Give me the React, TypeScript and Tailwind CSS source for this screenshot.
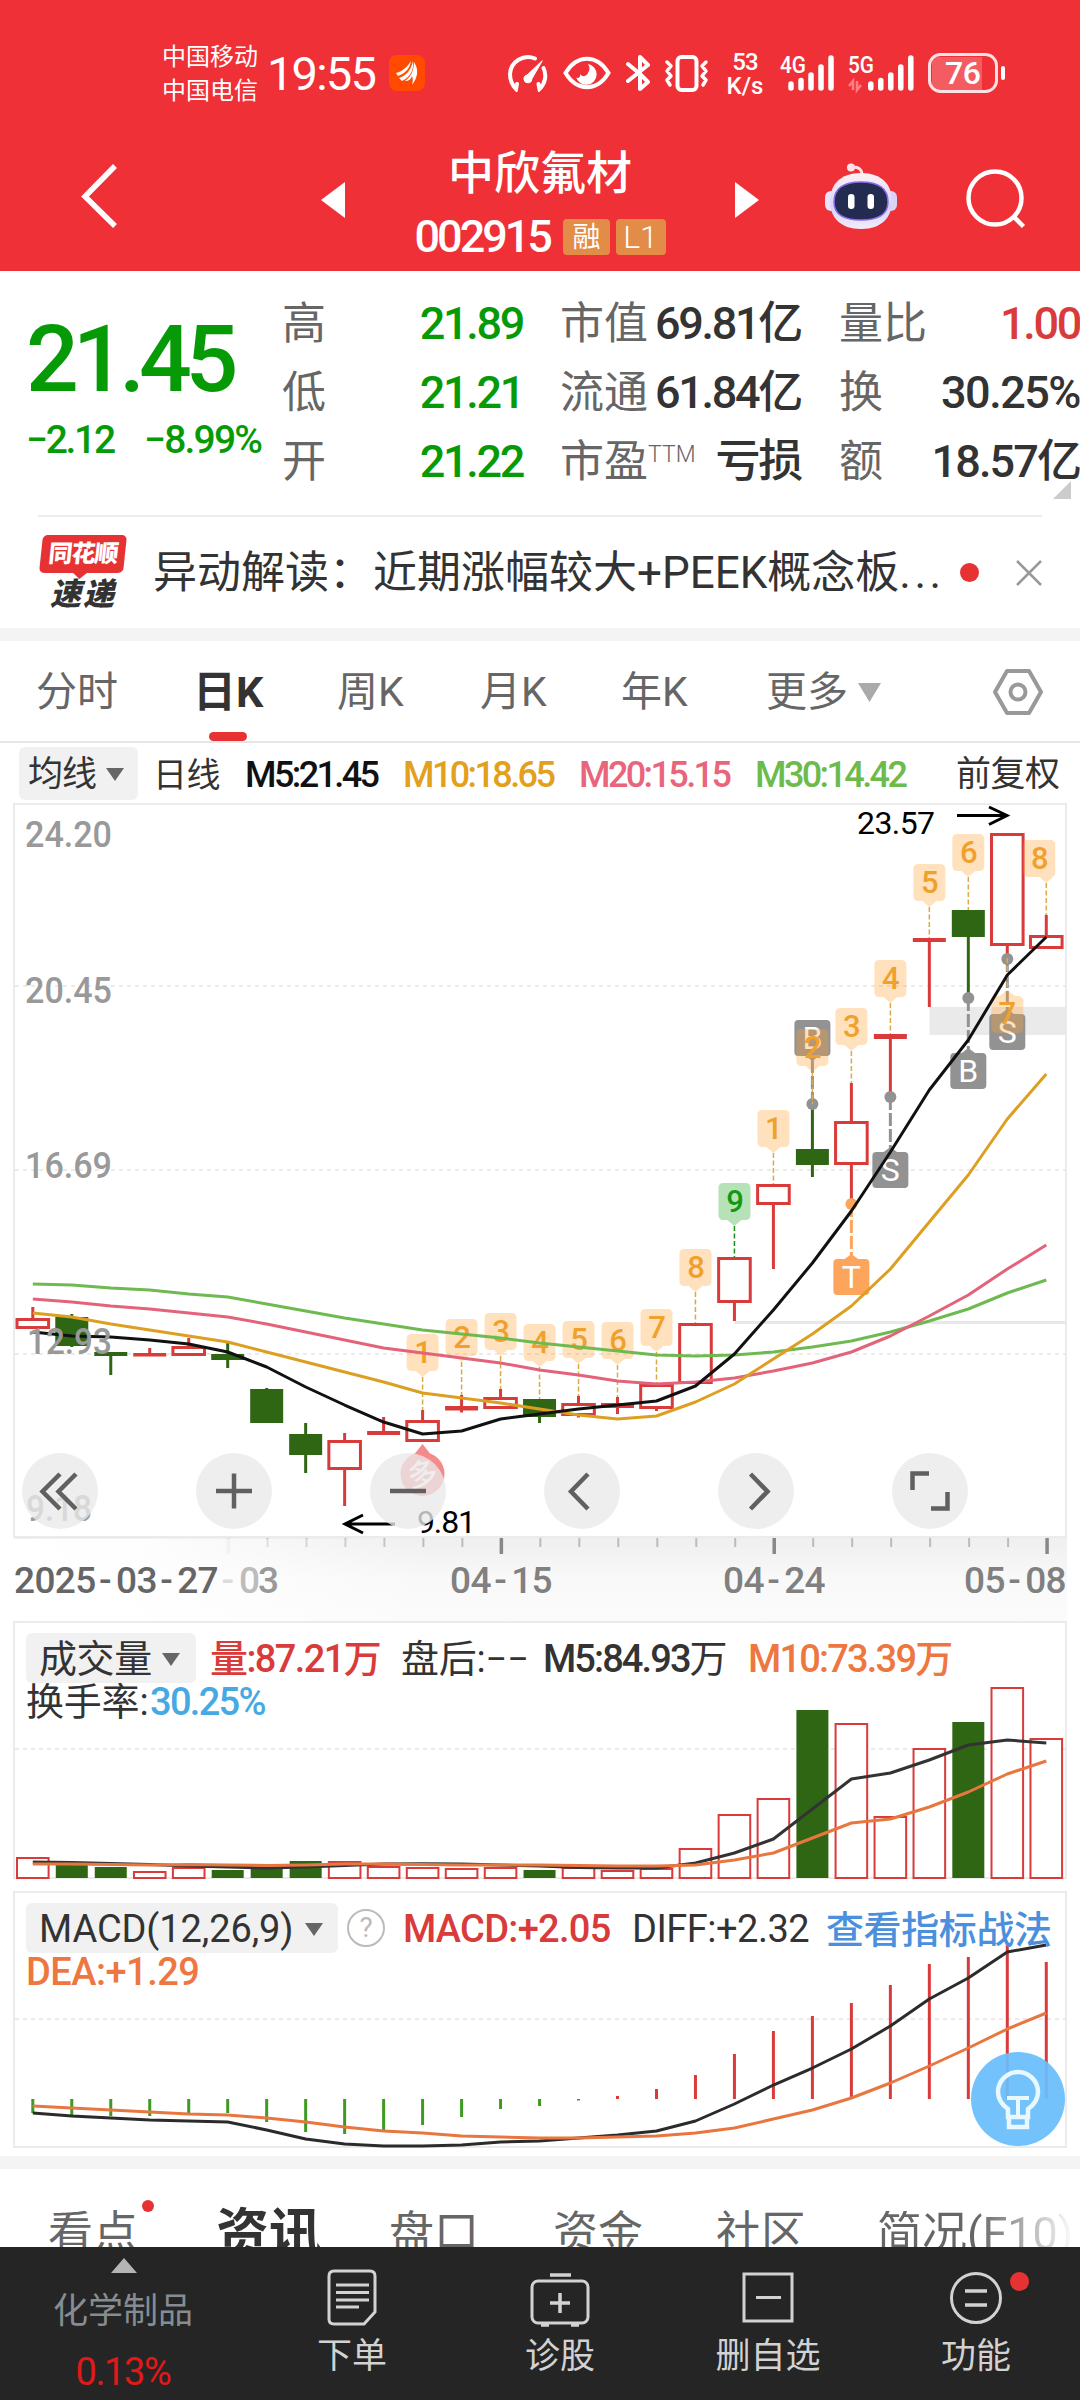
import type { ReactNode } from 'react';

type Candle = {
  t: number; // body top
  b: number; // body bottom
  h?: number; // wick top
  l?: number; // wick bottom
  up: boolean;
};

const STEP = 38.98;
const cx = (i: number) => 32.8 + i * STEP;
const line = (ys: number[]) => ys.map((y, i) => `${cx(i).toFixed(1)},${y}`).join(' ');

const RED = '#d93a3a';
const GREEN = '#2f6614';

const CANDLES: Candle[] = [
  { t: 1318, b: 1329, h: 1307, up: true },
  { t: 1317, b: 1346, h: 1314, l: 1347, up: false },
  { t: 1352, b: 1356, l: 1375, up: false },
  { t: 1353, b: 1356.5, h: 1348, up: true },
  { t: 1346, b: 1356, h: 1338, up: true },
  { t: 1354, b: 1360, h: 1343, l: 1368, up: false },
  { t: 1389, b: 1423, h: 1388, up: false },
  { t: 1434, b: 1455, h: 1423, l: 1473, up: false },
  { t: 1440, b: 1470, h: 1433, l: 1506, up: true },
  { t: 1431, b: 1435, h: 1417, up: true },
  { t: 1420, b: 1442, h: 1410, up: true },
  { t: 1406, b: 1410.5, h: 1395, l: 1412.5, up: true },
  { t: 1397, b: 1409, h: 1389, up: true },
  { t: 1399, b: 1417, l: 1423, up: false },
  { t: 1403, b: 1416, h: 1396, l: 1417.5, up: true },
  { t: 1403, b: 1408, h: 1397, l: 1414, up: true },
  { t: 1384, b: 1409, l: 1411, up: true },
  { t: 1323, b: 1384, up: true },
  { t: 1257, b: 1303, l: 1321, up: true },
  { t: 1184, b: 1205, l: 1269, up: true },
  { t: 1149, b: 1165, h: 1104, l: 1177, up: false },
  { t: 1121, b: 1165, h: 1083, l: 1204, up: true },
  { t: 1034, b: 1039, l: 1097, up: true },
  { t: 938, b: 942, l: 1007, up: true },
  { t: 910, b: 937, l: 998, up: false },
  { t: 833, b: 946, l: 958, up: true },
  { t: 935, b: 949, h: 915, up: true },
];

const M5 = [1332, 1336, 1337, 1340, 1344, 1352, 1367, 1387, 1405, 1422, 1434, 1431, 1419, 1414, 1409, 1405, 1401, 1386, 1354, 1310, 1263, 1211, 1152, 1090, 1040, 975, 937];
const M10 = [1313, 1317, 1324, 1330, 1336, 1342, 1352, 1362, 1372, 1382, 1393, 1398, 1403, 1409, 1415, 1419, 1416, 1402, 1384, 1359, 1334, 1306, 1269, 1222, 1175, 1119, 1074];
const M20 = [1299, 1302, 1306, 1309, 1313, 1317, 1324, 1332, 1340, 1348, 1353, 1358, 1363, 1370, 1375, 1381, 1384, 1382, 1378, 1371, 1363, 1352, 1336, 1316, 1295, 1269, 1245];
const M30 = [1284, 1285, 1288, 1290, 1294, 1297, 1304, 1311, 1318, 1324, 1330, 1334, 1338, 1343, 1347, 1351, 1355, 1356, 1355, 1352, 1347, 1341, 1332, 1321, 1309, 1293, 1280];

// [candle index, digit, tag top, end of the dashed line]
const TAGS: [number, string, number, number][] = [
  [10, '1', 1334, 1410],
  [11, '2', 1319, 1395],
  [12, '3', 1313, 1389],
  [13, '4', 1324, 1399],
  [14, '5', 1321, 1396],
  [15, '6', 1322, 1397],
  [16, '7', 1309, 1384],
  [17, '8', 1249, 1323],
  [18, '9', 1183, 1257],
  [19, '1', 1110, 1184],
  [20, '2', 1029, 1104],
  [21, '3', 1008, 1083],
  [22, '4', 960, 1034],
  [23, '5', 864, 938],
  [24, '6', 834, 910],
  [26, '8', 840, 915],
];

// [candle index, letter, box top, dot y, colour]
const TRADES: [number, string, number, number, string][] = [
  [20, 'B', 1020, 1104, '#929292'],
  [21, 'T', 1259, 1204, '#fda55d'],
  [22, 'S', 1152, 1097, '#929292'],
  [24, 'B', 1053, 998, '#929292'],
  [25, 'S', 1014, 959, '#929292'],
];

const VOLUME: [number, boolean][] = [
  [1857, true], [1865, false], [1867, false], [1871, true], [1867, true], [1870, false], [1868, false],
  [1861, false], [1861, true], [1866, true], [1867, true], [1868, true], [1867, true], [1870, false],
  [1867, true], [1870, true], [1868, true], [1848, true], [1814, true], [1798, true], [1710, false],
  [1723, true], [1816, true], [1748, true], [1722, false], [1687, true], [1738, true],
];
const V5 = [1862, 1862.5, 1863.5, 1864.5, 1866, 1867, 1868, 1867, 1865.5, 1864, 1863.7, 1864, 1865, 1866, 1867.5, 1868, 1868, 1863, 1853, 1839, 1809, 1779, 1773, 1760, 1745, 1740, 1743];
const V10 = [1864, 1864, 1864.5, 1865, 1864.5, 1865, 1865.5, 1865, 1864, 1864, 1864.5, 1865, 1865, 1865, 1865.5, 1866, 1866, 1865, 1860, 1853, 1838, 1823, 1819, 1807, 1792, 1774, 1761];

const MACD = [2113, 2115, 2116, 2116, 2113, 2113, 2122, 2132, 2134, 2130, 2125, 2117, 2109, 2106, 2100.5, 2096, 2089, 2075, 2054, 2031, 2016, 2003, 1985, 1964, 1957, 1943, 1962];
const DIFF = [2113, 2116, 2118, 2120, 2121, 2122, 2130, 2139, 2144, 2146, 2146, 2145, 2142, 2141, 2138, 2135, 2131, 2121, 2104, 2085, 2068, 2049, 2026, 1999, 1978, 1952, 1945];
const DEA = [2106, 2108, 2110, 2112, 2114, 2115, 2118, 2122, 2127, 2131, 2133, 2136, 2137, 2138, 2138, 2137, 2136, 2133, 2128, 2119, 2110, 2098, 2083, 2066, 2048, 2029, 2013];

export default function App() {
  return (
    <main className="flex h-[2400px] w-[1080px] flex-col overflow-hidden bg-white font-[Roboto,'Noto_Sans_CJK_SC',sans-serif] leading-none whitespace-nowrap text-[#333]">
      <header className="h-[271px] shrink-0 bg-[#f03037] text-white">
        <StatusBar />
        <TitleBar />
      </header>
      <Quote />
      <News />
      <div className="h-[13px] shrink-0 bg-[#f4f4f4]" />
      <PeriodTabs />
      <MaLegend />
      <KChart />
      <VolumePanel />
      <MacdPanel />
      <div className="h-[13px] shrink-0 bg-[#f4f4f4]" />
      <InfoTabs />
      <BottomBar />
    </main>
  );
}

function StatusBar() {
  return (
    <div className="flex h-[146px] items-center pl-[162px] [&>*]:shrink-0">
      <div className="flex w-[105px] flex-col gap-[10px] pt-[2px] text-[24px]">
        <span>中国移动</span>
        <span>中国电信</span>
      </div>
      <span className="w-[122px] text-[47px] tracking-[-1.800px]">19:55</span>
      <svg width="36" height="36" viewBox="0 0 36 36" className="mr-[82px]">
        <rect width="36" height="36" rx="8" fill="#ff4a00" />
        <path d="M7 18C14 16 18 12 22 6c-1 7-5 12-13 15zM10 23c7-2 12-8 14-17 1 8-2 16-11 20zM16 26c6-4 9-11 9-19 5 8 4 15-2 23 1-4 1-7 0-9-1 3-3 5-7 5z" fill="#fff" />
      </svg>

      {/* 网速仪表 */}
      <svg width="42" height="38" viewBox="0 0 42 38" fill="none" stroke="#fff" strokeWidth="4" strokeLinecap="round" className="mr-[14px]">
        <path d="M28 4.500A18 18 0 0 0 3 20C3 26 5 31 9 35l1-5M36.500 14a18 18 0 0 1-4 21l-1-5" />
        <path d="M35 7L20 21a4 4 0 1 0 5 4z" fill="#fff" strokeWidth="1" />
      </svg>
      <svg width="48" height="34" viewBox="0 0 48 34" fill="none" className="mr-[15px]">
        <path d="M2.500 17C14-2 34-2 45.500 17 34 36 14 36 2.500 17z" stroke="#fff" strokeWidth="4" />
        <path d="M25 8a10.500 10.500 0 1 1-12 13c1 2 5 1 4-3 2 3 6 3 8-1 2-3 2-6 0-9z" fill="#fff" />
      </svg>
      <svg width="24" height="38" viewBox="0 0 24 38" fill="none" stroke="#fff" strokeWidth="4" strokeLinecap="round" strokeLinejoin="round" className="mr-[14px]">
        <path d="M2 10L14 20V35l8-7-8-8M14 20V3l8 8L2 27" />
      </svg>
      <svg width="45" height="38" viewBox="0 0 45 38" fill="none" stroke="#fff" strokeWidth="3.500" strokeLinecap="round" strokeLinejoin="round" className="mr-[17px]">
        <rect x="13.500" y="3" width="19" height="33" rx="4" strokeWidth="4" />
        <path d="M3 8l4 4-4 5 4 5-4 4 3 5M42 8l-4 4 4 5-4 5 4 4-3 5" />
      </svg>
      <div className="flex w-[38px] flex-col items-center pt-px text-[24px] font-medium">
        <span className="tracking-[-1px]">53</span>
        <span>K/s</span>
      </div>
      <div className="mr-[12px] ml-[16px] flex">
        <Signal label="4G" />
        <Signal label="5G" data />
      </div>
      <svg width="78" height="40" viewBox="0 0 78 40" fill="none">
        <rect x="4" y="4" width="50" height="33" fill="#fff" fillOpacity=".22" />
        <rect x="1.500" y="1.500" width="67" height="37" rx="11" stroke="#fff" strokeOpacity=".85" strokeWidth="3" />
        <path d="M75 15v10" stroke="#fff" strokeWidth="4" strokeLinecap="round" />
        <text x="17" y="31" fontSize="32" fontWeight="500" fill="#fff" textLength="36">76</text>
      </svg>
    </div>
  );
}

function Signal({ label, data = false }: { label: string; data?: boolean }) {
  return (
    <svg width="68" height="40" viewBox="0 0 68 40" fill="none" className="overflow-visible">
      <text x="0" y="20" fontSize="24" fontWeight="500" fill="#fff" textLength="26" lengthAdjust="spacingAndGlyphs">
        {label}
      </text>
      {data && <path d="M1 33l4-5v9M9 28v9l4-5" stroke="#ff8084" strokeWidth="2.500" />}
      <g stroke="#fff" strokeWidth="5.500" strokeLinecap="round" transform={data ? 'translate(12.800 0)' : 'translate(1 0)'}>
        <path d="M10 31v4M20 27.500v7.500M30 22v13M40 14v21M50 5v30" />
      </g>
    </svg>
  );
}

function TitleBar() {
  return (
    <div className="flex items-start">
      <svg width="40" height="66" viewBox="0 0 40 66" fill="none" className="mt-[17px] ml-[80px]">
        <path d="M35 3L5 33.500 35 63" stroke="#fff" strokeWidth="5.500" />
      </svg>
      <svg width="24" height="36" viewBox="0 0 24 36" className="mt-[36px] ml-[201px]">
        <path d="M24 0v36L0 18z" fill="#fff" />
      </svg>
      <div className="flex w-[390px] flex-col items-center">
        <h1 className="mt-[4px] text-[46px] font-medium">中欣氟材</h1>
        <div className="mt-[18px] flex items-center">
          <span className="w-[149px] text-[45px] font-medium tracking-[-3px]">002915</span>
          <span className="mr-[6px] rounded-[4px] bg-[#e38c47] px-[9px] pt-[5px] pb-[3px] text-[28px]">融</span>
          <span className="w-[50px] rounded-[4px] bg-[#e38c47] py-[2px] text-center text-[32px] font-light">L1</span>
        </div>
      </div>
      <svg width="24" height="36" viewBox="0 0 24 36" className="mt-[36px]">
        <path d="M0 0v36l24-18z" fill="#fff" />
      </svg>
      <svg width="72" height="68" viewBox="0 0 72 68" className="mt-[17px] ml-[66px]">
        <defs>
          <linearGradient id="shell" x1="0" y1="0" x2="0" y2="1">
            <stop offset="0" stopColor="#fff1f4" />
            <stop offset=".6" stopColor="#d6d3fa" />
            <stop offset="1" stopColor="#f1ecfb" />
          </linearGradient>
        </defs>
        <path d="M37 12c0-5-2-8-9-8" fill="none" stroke="#ffe0e6" strokeWidth="3" />
        <circle cx="26" cy="4.500" r="4" fill="#ffe3e8" />
        <rect x="0" y="28" width="12" height="20" rx="6" fill="#e9e4fb" />
        <rect x="60" y="28" width="12" height="20" rx="6" fill="#d9d3f8" />
        <path d="M36 10C57 10 67 22 67 38S57 66 36 66 5 54 5 38 15 10 36 10z" fill="url(#shell)" />
        <path d="M36 19c18 0 27 6 27 20 0 12-8 18-27 18S9 51 9 39c0-14 9-20 27-20z" fill="#232b50" stroke="#8a6be8" strokeWidth="1.500" />
        <rect x="23" y="31" width="6.500" height="15" rx="3.200" fill="#fff" />
        <rect x="42.500" y="31" width="6.500" height="15" rx="3.200" fill="#fff" />
      </svg>
      <svg width="64" height="64" viewBox="0 0 64 64" fill="none" stroke="#fff" strokeWidth="4.500" className="mt-[21px] ml-[67px]">
        <circle cx="31" cy="31" r="26.500" />
        <path d="M50 50l9.500 9.500" />
      </svg>
    </div>
  );
}

function Quote() {
  return (
    <section className="relative flex h-[244px] shrink-0">
      <div className="w-[282px] pt-[42px] pl-[26px] text-[#079a07]">
        <div className="text-[93px] font-medium tracking-[-6.200px]">21.45</div>
        <div className="mt-[15px] flex text-[39px] font-medium">
          <span className="w-[118px] tracking-[-2.300px]">−2.12</span>
          <span className="tracking-[-1.800px]">−8.99%</span>
        </div>
      </div>
      <div className="w-[241px] pt-[18px]">
        <Stat label="高" value={<span className="text-[#079a07]">21.89</span>} />
        <Stat label="低" value={<span className="text-[#079a07]">21.21</span>} />
        <Stat label="开" value={<span className="text-[#079a07]">21.22</span>} />
      </div>
      <div className="ml-[37px] w-[241px] pt-[18px]">
        <Stat label="市值" value="69.81亿" />
        <Stat label="流通" value="61.84亿" />
        <Stat label={<>市盈<span className="relative -top-[15px] text-[23px] font-light">TTM</span></>} value="亏损" />
      </div>
      <div className="ml-[38px] w-[241px] pt-[18px]">
        <Stat label="量比" value={<span className="text-[#d93a3a]">1.00</span>} />
        <Stat label="换" value={<span className="tracking-[-1.500px]">30.25%</span>} />
        <Stat label="额" value={<span className="tracking-[-1.900px]">18.57亿</span>} />
      </div>
      <svg width="18" height="18" viewBox="0 0 18 18" className="absolute top-[210px] right-[9px]">
        <path d="M18 0v18H0z" fill="#ccc" />
      </svg>
    </section>
  );
}

function Stat({ label, value }: { label: ReactNode; value: ReactNode }) {
  return (
    <div className="flex h-[69px] items-center justify-between text-[44px]">
      <span className="text-[#666]">{label}</span>
      <span className="text-[45px] font-medium tracking-[-2.300px]">{value}</span>
    </div>
  );
}

function News() {
  return (
    <section className="ml-[38px] flex h-[113px] w-[1004px] shrink-0 items-center border-t-2 border-[#ededed]">
      <div className="flex w-[90px] flex-col items-center font-black italic">
        <div className="relative flex h-[38px] w-[84px] -skew-x-6 items-center justify-center rounded-[5px] bg-[#e63232] text-[24px] tracking-[-1px] text-white not-italic">
          同花顺
          <svg width="16" height="7" viewBox="0 0 16 7" className="absolute top-[37px] left-[33px]">
            <path d="M0 0h16L8 7z" fill="#e63232" />
          </svg>
        </div>
        <div className="mt-[6px] text-[31px] tracking-[2px]">速递</div>
      </div>
      <p className="ml-[25px] w-[797px] text-[44px]">
        异动解读：近期涨幅较大+PEEK概念板<span className="tracking-[3.500px]">...</span>
      </p>
      <span className="ml-[10px] h-[19px] w-[19px] shrink-0 rounded-full bg-[#e63232]" />
      <svg width="26" height="26" viewBox="0 0 26 26" stroke="#999" strokeWidth="2.500" className="ml-auto">
        <path d="M1 1l24 24M25 1L1 25" />
      </svg>
    </section>
  );
}

function PeriodTabs() {
  return (
    <nav className="relative flex h-[102px] shrink-0 items-center border-b-2 border-[#e6e6e6] pt-[2px] pl-[36px] text-[41px] text-[#666]">
      <span className="w-[157px]">分时</span>
      <span className="w-[144px] text-[43px] font-bold text-[#333]">日K</span>
      <span className="w-[143px]">周K</span>
      <span className="w-[141px]">月K</span>
      <span className="w-[145px]">年K</span>
      <span>更多</span>
      <svg width="23" height="19" viewBox="0 0 23 19" className="ml-[10px]">
        <path d="M0 0h23L11.500 19z" fill="#aaa" />
      </svg>
      <svg width="50" height="48" viewBox="0 0 50 48" fill="none" stroke="#999" strokeWidth="4" strokeLinejoin="round" className="ml-[112px]">
        <path d="M14 3h22l12 21-12 21H14L2 24z" />
        <circle cx="25" cy="24" r="7.500" />
      </svg>
      <span className="absolute bottom-0 left-[209px] h-[9px] w-[38px] rounded-full bg-[#e63232]" />
    </nav>
  );
}

function Caret() {
  return (
    <svg width="18" height="13" viewBox="0 0 18 13">
      <path d="M0 0h18L9 13z" fill="#666" />
    </svg>
  );
}

function MaLegend() {
  return (
    <div className="flex h-[60px] shrink-0 items-center pl-[19px] text-[36px] tracking-[-2.600px]">
      <div className="mr-[15px] flex h-[53px] w-[119px] items-center gap-[10px] rounded-[6px] bg-[#f1f1f1] pt-[2px] pl-[9px] text-[35px] tracking-[-1px]">
        均线
        <Caret />
      </div>
      <span className="w-[92px] pt-[3px] text-[34px] tracking-[-0.500px]">日线</span>
      <span className="w-[158px] pt-[3px] font-medium text-[#111]">M5:21.45</span>
      <span className="w-[176px] pt-[3px] font-medium text-[#e2a01d]">M10:18.65</span>
      <span className="w-[176px] pt-[3px] font-medium text-[#e9657b]">M20:15.15</span>
      <span className="w-[201px] pt-[3px] font-medium text-[#6cbb4c]">M30:14.42</span>
      <span className="pt-[3px] text-[35px] tracking-[-0.500px]">前复权</span>
    </div>
  );
}

function KChart() {
  return (
    <svg width="1080" height="818" viewBox="0 803 1080 818" className="shrink-0">
      <defs>
        <linearGradient id="axis" x1="0" y1="0" x2="0" y2="1">
          <stop offset="0" stopColor="#efefef" />
          <stop offset=".5" stopColor="#f9f9f9" />
          <stop offset="1" stopColor="#fbfbfb" />
        </linearGradient>
        <linearGradient id="axisFade" x1="0" x2="1" y1="0" y2="0">
          <stop offset="0" stopColor="#fff" />
          <stop offset=".3" stopColor="#fff" stopOpacity=".9" />
          <stop offset="1" stopColor="#fff" stopOpacity="0" />
        </linearGradient>
      </defs>

      <rect x="14" y="1538" width="1053" height="83" fill="url(#axis)" />
      <rect x="14" y="804" width="1052" height="733" fill="none" stroke="#ebebeb" strokeWidth="2" />
      {[986, 1170, 1354].map((y) => (
        <path key={y} d={`M15 ${y}H1066`} stroke="#ebebeb" strokeWidth="2" strokeDasharray="4 4" />
      ))}

      {/* 缺口 */}
      <rect x="929.500" y="1007" width="137" height="28" fill="#eaeaea" />
      <rect x="735" y="1321" width="332" height="3" fill="#e8e8e8" />

      {CANDLES.map((c, i) => (
        <CandleShape key={i} c={c} x={cx(i)} />
      ))}

      {TRADES.map(([i, s, top, dot, color]) => (
        <Trade key={i} x={cx(i)} letter={s} top={top} dot={dot} color={color} />
      ))}

      {TAGS.map(([i, n, top, end]) => (
        <Tag key={i} x={cx(i)} n={n} top={top} end={end} shift={i === 26 ? -7 : 0} />
      ))}

      {/* 倒置的 7 */}
      <path d={`M${cx(25)} 958V990`} stroke="#e5a94b" strokeWidth="1.500" strokeDasharray="5 3" />
      <g fill="#ffa533" fillOpacity=".32">
        <rect x={cx(25) - 16} y="996" width="32" height="37" rx="5" />
        <path d={`M${cx(25) - 8} 996l8-6 8 6z`} />
      </g>
      <text x={cx(25)} y="1024" fontSize="31" fontWeight="500" fill="#f0a02c" textAnchor="middle">7</text>

      <g fill="none" strokeWidth="3" strokeLinejoin="round">
        <polyline points={line(M30)} stroke="#6fba50" />
        <polyline points={line(M20)} stroke="#e2637a" />
        <polyline points={line(M10)} stroke="#dd9f22" />
        <polyline points={line(M5)} stroke="#111" />
      </g>

      <g fill="#999" fontSize="36" fontWeight="500">
        <text x="25" y="847" textLength="87" lengthAdjust="spacingAndGlyphs">24.20</text>
        <text x="25" y="1003" textLength="87" lengthAdjust="spacingAndGlyphs">20.45</text>
        <text x="25" y="1178" textLength="87" lengthAdjust="spacingAndGlyphs">16.69</text>
        <text x="27" y="1354" textLength="85" lengthAdjust="spacingAndGlyphs">12.93</text>
        <text x="26" y="1521" textLength="66" lengthAdjust="spacingAndGlyphs">9.18</text>
      </g>

      {/* 最高 / 最低 */}
      <g fill="none" stroke="#000" strokeWidth="3">
        <path d="M957 815.500h50M989 807l18 8.500-18 9" />
        <path d="M395 1524h-50M363 1515l-18 9 18 9" />
      </g>
      <text x="857" y="834" fontSize="32" fill="#000" textLength="78">23.57</text>
      <text x="417" y="1533" fontSize="32" fill="#000" textLength="59">9.81</text>

      <g>
        <circle cx="422.500" cy="1474" r="22" fill="#f48b8b" />
        <path d="M413 1456l9.500-12 9.500 12z" fill="#f48b8b" />
        <text x="422.500" y="1485" fontSize="30" fontWeight="500" fill="#fff" textAnchor="middle" transform="rotate(-12 422.500 1474)">多</text>
      </g>

      {[60, 234, 408, 582, 756, 930].map((x) => (
        <circle key={x} cx={x} cy="1491" r="38" fill="#e9e9e9" fillOpacity=".78" />
      ))}
      <g fill="none" stroke="#606060" strokeWidth="4.500">
        <path d="M60 1474l-17.500 17.500 17.500 17.500M76 1474l-17.500 17.500 17.500 17.500" />
        <path d="M216 1491h36M234 1473.500v35M390 1491h36" />
        <path d="M588 1474l-17 17.500 17 17.500M750.500 1474l17 17.500-17 17.500" />
        <path d="M929 1473.500h-16.500V1490M931 1508.500h16.500V1492" />
      </g>

      {/* 时间轴 */}
      {CANDLES.map((_, i) =>
        i < 5 ? null : (
          <path
            key={i}
            d={`M${cx(i) + 0.8} 1538V${[5, 12, 19, 26].includes(i) ? 1554 : 1547}`}
            stroke={i === 5 ? '#ddd' : [12, 19, 26].includes(i) ? '#888' : '#bbb'}
            strokeWidth={[5, 12, 19, 26].includes(i) ? 3.500 : 2}
          />
        ),
      )}
      <rect x="14" y="1539" width="420" height="82" fill="url(#axisFade)" />
      <g fontSize="37" fontWeight="500" fill="#808080">
        <DateText x={14} y={1593} text="2025-03-27" fill="#666" />
        <DateText x={218} y={1593} text="-" fill="#dcdcdc" />
        <DateText x={239} y={1593} text="0" fill="#bcbcbc" />
        <DateText x={258} y={1593} text="3" fill="#999" />
        <DateText x={450} y={1593} text="04-15" />
        <DateText x={723} y={1593} text="04-24" />
        <DateText x={964} y={1593} text="05-08" />
      </g>
    </svg>
  );
}

// fixed-pitch digits with a full-width hyphen
function DateText({ x, y, text, fill }: { x: number; y: number; text: string; fill?: string }) {
  return (
    <text y={y} x={[...text].map((ch, i) => x + i * 20.4 + (ch === '-' ? 3.5 : 0)).join(' ')} fill={fill}>
      {text}
    </text>
  );
}

function CandleShape({ c, x }: { c: Candle; x: number }) {
  const color = c.up ? RED : GREEN;
  const hollow = c.up && c.b - c.t > 8;
  return (
    <g stroke={color} strokeWidth="3">
      {c.h !== undefined && <path d={`M${x} ${c.h}V${c.t + 1}`} />}
      {c.l !== undefined && <path d={`M${x} ${c.b - 1}V${c.l}`} />}
      {hollow ? (
        <rect x={x - 15.8} y={c.t + 1.5} width="31.600" height={c.b - c.t - 3} fill="none" />
      ) : (
        <rect x={x - 16.5} y={c.t} width="33" height={c.b - c.t} fill={color} stroke="none" />
      )}
    </g>
  );
}

function Tag({ x, n, top, end, shift }: { x: number; n: string; top: number; end: number; shift: number }) {
  const nine = n === '9';
  return (
    <g>
      <path d={`M${x} ${top + 43}V${end}`} stroke={nine ? '#1a8f1a' : '#d9ab45'} strokeWidth="1.500" strokeDasharray="5 2.500" />
      <path
        d={`M${x + shift - 11} ${top}h22q5 0 5 5v27q0 5 -5 5L${x + 7} ${top + 37}l-7 6-7-6L${x + shift - 11} ${top + 37}q-5 0-5-5v-27q0-5 5-5z`}
        fill={nine ? '#1ea61e' : '#ffa533'}
        fillOpacity=".32"
      />
      <text x={x + shift + 0.5} y={top + 29} fontSize="31" fontWeight="500" fill={nine ? '#129912' : '#f0a02c'} textAnchor="middle">
        {n}
      </text>
    </g>
  );
}

function Trade({ x, letter, top, dot, color }: { x: number; letter: string; top: number; dot: number; color: string }) {
  const above = dot > top;
  return (
    <g>
      <path d={above ? `M${x} ${top + 40}V${dot}` : `M${x} ${dot}V${top - 4}`} stroke={color} strokeWidth="3" strokeDasharray="13 3" />
      <circle cx={x} cy={dot} r="6" fill={color} />
      <path d={above ? `M${x - 8} ${top + 35}l8 6 8-6z` : `M${x - 8} ${top + 1}l8-6 8 6z`} fill={color} />
      <rect x={x - 18} y={top} width="36" height="36" rx="4" fill={color} />
      <text x={x} y={top + 29} fontSize="32" fill="#fff" textAnchor="middle">
        {letter}
      </text>
    </g>
  );
}

function VolumePanel() {
  return (
    <section className="grid h-[270px] shrink-0">
      <svg width="1080" height="270" viewBox="0 1621 1080 270" className="[grid-area:1/1]">
        <rect x="14" y="1622" width="1052" height="256" fill="none" stroke="#ebebeb" strokeWidth="2" />
        <path d="M15 1749H1066" stroke="#ebebeb" strokeWidth="2" strokeDasharray="4 4" />
        {VOLUME.map(([y, up], i) =>
          up ? (
            <rect key={i} x={cx(i) - 15.8} y={y + 1} width="31.600" height={1877 - y} fill="#fff" stroke={RED} strokeWidth="2" />
          ) : (
            <rect key={i} x={cx(i) - 16} y={y} width="32" height={1878 - y} fill={GREEN} />
          ),
        )}
        <g fill="none" strokeWidth="3" strokeLinejoin="round">
          <polyline points={line(V5)} stroke="#333" />
          <polyline points={line(V10)} stroke="#e8763f" />
        </g>
      </svg>
      <div className="[grid-area:1/1] pt-[12px] pl-[26px] text-[38px]">
        <div className="flex h-[50px] items-center font-medium tracking-[-2.100px]">
          <div className="mr-[14px] flex h-[50px] w-[170px] items-center gap-[10px] rounded-[6px] bg-[#f1f1f1] pt-[2px] pl-[13px] font-normal tracking-[-0.400px]">
            成交量
            <Caret />
          </div>
          <span className="w-[191px] pt-[2px] tracking-[-1.600px] text-[#d93a3a]"><i className="not-italic">量:</i>87.21<i className="not-italic">万</i></span>
          <span className="w-[142px] pt-[2px] font-normal tracking-[-0.200px]">盘后:−−</span>
          <span className="w-[205px] pt-[2px] tracking-[-1.900px]">M5:84.93<i className="font-normal not-italic">万</i></span>
          <span className="pt-[2px] tracking-[-1.800px] text-[#ee7741]">M10:73.39<i className="not-italic">万</i></span>
        </div>
        <div className="flex">
          <span className="w-[124px] tracking-[-0.200px]">换手率:</span>
          <span className="font-medium tracking-[-1.700px] text-[#47a9e2]">30.25%</span>
        </div>
      </div>
    </section>
  );
}

function MacdPanel() {
  return (
    <section className="relative grid h-[265px] shrink-0">
      <svg width="1080" height="265" viewBox="0 1891 1080 265" className="[grid-area:1/1]">
        <rect x="14" y="1892" width="1052" height="255" fill="none" stroke="#ebebeb" strokeWidth="2" />
        <path d="M15 2019H1066" stroke="#ebebeb" strokeWidth="2" strokeDasharray="4 4" />
        {MACD.map((y, i) => (
          <path key={i} d={`M${cx(i)} 2099V${y}`} stroke={y > 2099 ? '#3d9a22' : RED} strokeWidth="3" />
        ))}
        <g fill="none" strokeWidth="3" strokeLinejoin="round">
          <polyline points={line(DIFF)} stroke="#2b2b2b" />
          <polyline points={line(DEA)} stroke="#e8763f" />
        </g>
      </svg>
      <div className="[grid-area:1/1] pt-[12px] pl-[26px] text-[38px]">
        <div className="flex h-[50px] items-center">
          <div className="mr-[9px] flex h-[50px] w-[312px] items-center justify-between rounded-[6px] bg-[#f1f1f1] pt-[2px] pr-[15px] pl-[13px] tracking-[-0.100px]">
            MACD(12,26,9)
            <Caret />
          </div>
          <span className="mr-[18px] flex h-[38px] w-[38px] items-center justify-center rounded-full border-[2.500px] border-[#bbb] text-[28px] text-[#bbb]">?</span>
          <span className="w-[229px] pt-[2px] font-medium tracking-[-0.700px] text-[#d93a3a]">MACD:+2.05</span>
          <span className="w-[194px] pt-[2px] tracking-[-0.500px]">DIFF:+2.32</span>
          <span className="pt-[3px] font-medium tracking-[-0.400px] text-[#4a90dc]">查看指标战法</span>
        </div>
        <div className="font-medium tracking-[-0.500px] text-[#ee7741]">DEA:+1.29</div>
      </div>
      <svg width="94" height="94" viewBox="0 0 94 94" fill="none" className="absolute top-[161px] left-[971px]">
        <circle cx="47" cy="47" r="47" fill="#68bdfc" fillOpacity=".93" />
        <g stroke="#e9f8ff" strokeWidth="4.500">
          <path d="M37 65v-8c-7-5-10-10-10-17a20 20 0 0 1 40 0c0 7-3 12-10 17v8zM38 65v10h18V65" />
          <path d="M36 46h22M47 46v18" strokeWidth="4" />
        </g>
      </svg>
    </section>
  );
}

function InfoTabs() {
  return (
    <nav className="relative flex h-[78px] shrink-0 items-start overflow-hidden pt-[42px] pl-[48px] text-[45px] text-[#666]">
      <span className="w-[168px]">看点</span>
      <span className="-mt-[3px] w-[173px] text-[53px] font-bold text-[#333]">资讯</span>
      <span className="w-[164px]">盘口</span>
      <span className="w-[163px]">资金</span>
      <span className="w-[161px]">社区</span>
      <span className="bg-linear-to-r from-[#666] from-50% to-white bg-clip-text pb-3 text-transparent">简况(F10)</span>
      <span className="absolute top-[31px] left-[142px] h-[12px] w-[12px] rounded-full bg-[#e63232]" />
    </nav>
  );
}

function BottomBar() {
  return (
    <footer className="flex h-[153px] shrink-0 bg-[#252525] text-[35px] text-[#d2d2d2]">
      <div className="flex w-[248px] flex-col items-center pt-[11px]">
        <svg width="26" height="15" viewBox="0 0 26 15">
          <path d="M13 0l13 15H0z" fill="#b5b5b5" />
        </svg>
        <span className="mt-[21px] mr-[2px] text-[#858d92]">化学制品</span>
        <span className="mt-[24px] mr-[2px] text-[38px] tracking-[-1.400px] text-[#e01919]">0.13%</span>
      </div>
      <NavItem label="下单">
        <path d="M8 4h36q5 0 5 5v36L38 57H8q-5 0-5-5V9q0-5 5-5z" />
        <path d="M10 18h33M10 25.500h33M10 33h33M10 40h23" />
      </NavItem>
      <NavItem label="诊股">
        <rect x="-2" y="14" width="56" height="42" rx="6" />
        <path d="M16 8h21M26 26v20M16 36h20M7 58h8M37 58h8" strokeWidth="3.500" />
      </NavItem>
      <NavItem label="删自选">
        <path d="M2 7h48v47H2zM14 30.500h25" />
      </NavItem>
      <div className="relative">
        <NavItem label="功能">
          <circle cx="26" cy="31" r="24.500" />
          <path d="M15 24h22M15 38h22" strokeWidth="3.500" />
        </NavItem>
        <span className="absolute top-[25px] left-[138px] h-[19px] w-[19px] rounded-full bg-[#e63232]" />
      </div>
    </footer>
  );
}

function NavItem({ label, children }: { label: string; children: ReactNode }) {
  return (
    <div className="flex w-[208px] flex-col items-center pt-[20px]">
      <svg width="60" height="62" viewBox="-4 0 60 62" fill="none" stroke="#d2d2d2" strokeWidth="3">
        {children}
      </svg>
      <span className="mt-[10px]">{label}</span>
    </div>
  );
}
